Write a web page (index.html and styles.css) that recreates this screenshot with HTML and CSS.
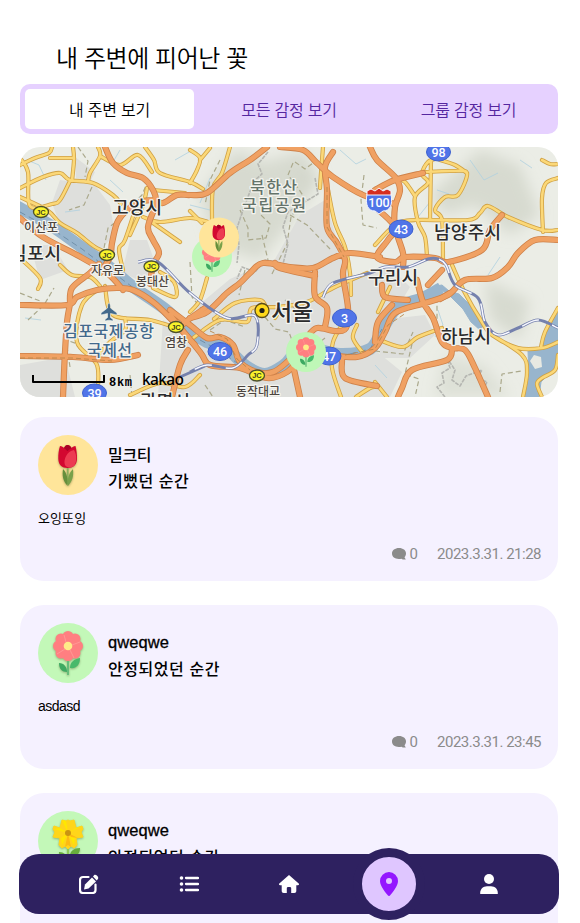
FILE: index.html
```html
<!DOCTYPE html>
<html lang="ko">
<head>
<meta charset="utf-8">
<meta name="viewport" content="width=device-width, initial-scale=1">
<title>내 주변에 피어난 꽃</title>
<link rel="stylesheet" href="styles.css">
</head>
<body>
<svg class="sprite" aria-hidden="true">
  <symbol id="tulip" viewBox="0 0 60 60">
    <path d="M29.7 32v17" stroke="#8daf5c" stroke-width="1.8"/>
    <path d="M29.5 51C25 46 24 41 25 34c4 4 5 10 4.500 17Z" fill="#668f3c"/>
    <path d="M30 51c4.500-5 5.700-10 5-17-4 4-6 10-5 17Z" fill="#79a14a"/>
    <path d="M22 11c2 0 3 1 4 2 1-2 2-3 3.500-3s3 1 4 3c1-1 2-2 4-2 1 4 1.600 8 1.500 13-.2 6-4 9-9.500 9s-9-3-9.200-9c-.1-5 .4-9 1.700-13Z" fill="#d30830"/>
    <path d="M36 15c3 5 3 12 0 16-2 2-8 2-9-1-2-5 2-14 9-15Z" fill="#ec3b52"/>
    <path d="M26 13c1-2 2-3 3.500-3s3 1 4 3l-4 3Z" fill="#a90026"/>
  </symbol>
  <symbol id="blossom" viewBox="0 0 60 60">
    <path d="M30 34v18" stroke="#65bd7a" stroke-width="2"/>
    <path d="M29 49c-5 0-8-3-8-9 5 0 8 4 8 9Z" fill="#3daa62"/>
    <path d="M32 45c0-6 4-9 10-10 0 7-4 11-10 10Z" fill="#48b96b"/>
    <g fill="#ff7f81"><circle cx="30" cy="13.500" r="5.500"/><circle cx="37" cy="16" r="5.500"/><circle cx="39.500" cy="23" r="5.500"/><circle cx="37" cy="30" r="5.500"/><circle cx="30" cy="32.500" r="5.500"/><circle cx="23" cy="30" r="5.500"/><circle cx="20.500" cy="23" r="5.500"/><circle cx="23" cy="16" r="5.500"/><circle cx="30" cy="23" r="9"/></g>
    <path d="M28 19l-2-7M34 22l8-3M32 27l4 8M27 26l-8 5" stroke="#ffa29c" stroke-width=".7"/>
    <circle cx="30" cy="23" r="4.300" fill="#ffeb88"/>
  </symbol>
  <symbol id="daisy" viewBox="0 0 60 60">
    <path d="M30 34v18" stroke="#8fca58" stroke-width="2"/>
    <path d="M29 48c-5 0-8-3-8-7 5 0 8 3 8 7ZM32 45c0-5 4-8 10-8 0 6-4 9-10 8Z" fill="#68ad3c"/>
    <path d="M24 9l4 1 2-1 2 1 4-1 2 8 6-2 1 3-2 3 2 5-7 1 1 7-3 3-3-2-3 3-3-3-3 2-3-3 1-7-7-1 2-5-2-3 1-3 6 2Z" fill="#ffd51a" stroke="#ffd51a" stroke-linejoin="round"/>
    <path d="M30 22L24 9l4 1zM30 22l8-5 6-2zM30 22l7 5-1 7zM30 22l-7 5 1 7zM30 22l-14-4 6-1z" fill="#ffe700"/>
    <path d="M30 22l3 14-3-2-3 2zM30 22l10 5-7-1z" fill="#fdb913"/>
    <circle cx="30" cy="22" r="3" fill="#c99412"/>
  </symbol>
  <symbol id="bubble" viewBox="0 0 14 12"><path d="M7 0c4 0 7 2.300 7 5.500 0 1.500-.6 2.800-1.500 3.700l1.300 2.300c-1.700.3-3.300 0-4.400-.8C4 11.800 0 9.500 0 5.500 0 2.300 3 0 7 0Z" fill="#8b8b8b"/></symbol>
</svg>

<main class="page">
  <h1 class="title">내 주변에 피어난 꽃</h1>
  <div class="tabs">
    <button class="tab tab-on">내 주변 보기</button>
    <button class="tab">모든 감정 보기</button>
    <button class="tab">그룹 감정 보기</button>
  </div>

  <svg class="map" viewBox="20 147 538 250">
    <defs>
      <filter id="soft" x="-40%" y="-40%" width="180%" height="180%"><feGaussianBlur stdDeviation="7"/></filter>
      <g id="jc"><ellipse rx="7.500" ry="5.500" fill="#f8f32b" stroke="#4d512c" stroke-width="1.300"/><text y="2.800" class="jc">JC</text></g>
      <g id="yellow">
        <path class="curve" d="M20 165 35 158 49 153 52 147M50 158H73M73 147 74 160 72 181M20 188 43 177 60 173 70 180 93 183 113 195 121 204M70 181 60 200 52 204 30 206 28 172 20 158M98 147 100 156 90 173 88 182M100 156 120 165 138 155 152 172M145 147 154 160 160 173 190 182 203 189M153 190 185 193M143 217 160 222 190 218 208 222M153 223 180 242M137 204 125 240 119 249 123 270M147 188 143 205 130 235"/>
        <path class="curve" d="M20 197 47 210 60 223 77 233 95 247 113 255M230 147 222 173 213 188 212 220M190 183 197 170 200 158 190 150M200 160 210 148M323 147 321 173 320 188M328 190 335 223 345 247 350 273 351 295M190 211 202 223M438 158 428 162 422 174 428 183 415 197 418 222 425 237 427 257M425 172 452 171 467 173 458 195 445 197 435 210 442 220 443 260M440 160 455 165 467 173M395 177 405 182 415 196M375 245 395 225 415 220 468 220 480 213 488 206 508 217 542 230 558 230M542 160 550 164 558 164M558 178 546 183 542 198 543 232M431 160 430 220"/>
        <path class="curve" d="M375 338 402 347 418 337 442 328M452 265 465 293 482 322 492 335 518 348 542 348 558 342M492 335 522 355 527 372 523 397M558 308 545 332 541 347M542 397 537 384 542 378 555 370 558 355M375 382 387 397M60 265 72 275 90 277 100 286M100 288 82 305 77 342 97 365 97 397M105 286 113 315 150 320 177 328M125 318 125 330 110 342 98 355M153 288 175 297 174 282 160 272M130 395 160 383 185 387 200 375M207 278 200 300 190 312M193 338 220 320 247 322 252 308 277 307 307 302 333 288 367 273M214 319 235 303 260 300 266 308M357 325 353 338 363 353M345 320 333 342 332 368 341 397M280 310 275 318M356 397 370 388 377 387M390 287 378 312M20 258 40 278 38 289"/>
      </g>
      <g id="orange">
        <path class="curve" d="M105 147 113 163 127 173 143 178 153 190 156 203 148 227 153 240 159 253 153 265 150 284M267 147 250 160 230 173 207 193 190 195 177 195 163 203 153 200 137 203 125 212 117 223 112 243 110 257 100 273M280 147 303 150 317 163 333 177 363 195 395 204M333 152 325 167 327 190 327 227 337 243 345 260 343 275 348 308 346 328 335 331 317 328 307 337M380 257 350 253 333 258 313 268 290 267 263 263 250 273 240 283 227 293 207 312 190 318"/>
        <path class="curve" d="M370 147 377 160 395 177 400 190 395 207 395 227 403 253 403 267M423 173 395 180 375 190M375 207 395 227 388 240 377 257 395 262 405 257 435 258 448 262 482 250 490 230 502 215M558 240 535 240 518 253 508 267 492 278 465 280 448 295 425 303 395 313 385 332 375 348 357 357 330 355M307 342 287 362 273 372 257 372 240 362 233 345 220 337 207 338 190 325 170 310M170 315 200 352 210 365 240 368 267 378 287 372 303 355M417 280 423 302 433 318 442 342 452 348 465 350 475 368 488 397M452 348 447 360 412 370 402 388 398 397M382 285 385 297 408 300M442 270 428 285M392 305 378 322 375 342"/>
        <path class="curve" d="M20 305 67 305 77 297 97 290 117 288 133 290 153 302 170 318 195 345M70 304 67 322 65 352 63 397M70 304 72 288 90 273 99 264M20 218 43 237 77 255 107 273 123 290M20 356 73 357 110 360 138 355M205 308 188 320 179 328M188 350 180 365 172 397M293 365 300 397M342 360 345 378 377 386M315 272 315 296 327 308 325 327M315 276 280 268 275 263M450 293 440 299"/>
      </g>
    </defs>
    <rect x="20" y="147" width="538" height="250" fill="#ebede6"/>
    <g filter="url(#soft)" fill="#d0d4c8">
      <path d="M200 195l35-45 30 12 40-12 15 30-35 50-25 30-45-15ZM480 150l40 15 20 50-30 20-35-30-30 10-15-20ZM485 280l45 20-10 40-30-20Z" opacity=".75"/>
      <path d="M445 355l40 10 25 32h-75ZM290 165l25 10-10 30Z" opacity=".5"/>
    </g>
    <g fill="#dedfdc">
      <path d="M60 180l35 5 15 20 5 30-15 15-40-25-8-22ZM75 157l20 15-5 10-14-4ZM130 240l17 0 7 20-10 23-22-11ZM300 215l25-15 12 40 13 40 40-13 20 20-30 50-10 62H160l10-50 30-45 30-25 45-20ZM380 320l45-5 10 20-25 23-30 0ZM20 365l45-8 10 40H20ZM30 245l23 0 15 25-28 10ZM163 320l35 20 30 57h-70ZM375 350l27 22-12 25H360Z"/>
    </g>
    <g class="stream"><path d="M27 160l12 5 7 15M120 150l-7 12 6 9M80 210l-15 2M175 160l14-8M25 318l16 2M470 160l14 20 14-7M520 160l12 8M110 180l13 12M430 202l-12 15M375 365l12 13M210 178l-10 25M437 190l12 4M500 257l-12 18M20 210l12 4"/><path d="M438 310l5 15-8 12M455 230l20-5M80 325l-14 15M340 150l16 14 10-5M190 205l20 5"/></g>
    <path class="trail" d="M78 147l10 14-3 16M92 187l-8 18-15 5M122 215l20-20 5-12M104 248l4-20 20-15M220 160l-10 20-5 25M295 162l10 7 8-6M293 163l-5 12 8 10 8 12-13 20-4 27-16 32M240 210l8 18 0 12 18-2 4-14-9-9M290 215l17 10 24 25M262 235l6 25M364 175l-3 25 2 25 14 3M28 320l16-15 10-17M70 367l-4-27 12 4M265 317l10 12 14 3 6 17M190 262l2 35 12 15M205 385l8 12M285 300l15 13 5-12M375 351l28 3 10-22M412 344l-7 30 14 5-4 18M500 392l2-18 20-3M538 350l-5 24 12 3M210 330l15-10 20 7M245 270l-6 25M130 375l2 22M430 292l7 10v18M325 338l-15 12M20 293l20 8"/>
    <path class="boundary" d="M268 152l-10 12 4 10-8 7-11 29-6 18 2 17-2 18M315 178l3 16-30 18-5 15 5 17-5 20-18-4-10 12-13-5-5 12M445 397l-8-10 7-4-2-10 8-5-3-10 8 12-3 10 8 6 6-10 16-6-5 8 10 4-4 8"/>
    <g class="water">
      <path class="curve" d="M16 206 50 225 80 246 108 266 132 286 165 309 188 330 207 342 226 348 246 366 265 374 284 365 303 348 340 354 370 349 383 328 398 307 423 298 441 288"/>
      <path class="area" d="M436 286 442 285 449 291 459 294 472 307 483 326 480 330 471 322 463 309 450 296ZM528 351 541 350 545 335 547 327 554 318 558 313V365L549 374 541 382 539 397H525L529 377Z"/>
    </g>
    <path d="M534 355l7 2 1 10-7 2-5-8Z" fill="#e8e9e2"/>
    <path class="ferry" d="M20 212l35 19 27 18 29 22 24 18M200 340l20 11 20 14M350 354l20-5 12-20"/>
    <use href="#yellow" class="road yellow-edge"/><use href="#yellow" class="road yellow-fill"/>
    <use href="#orange" class="road orange-edge"/><use href="#orange" class="road orange-fill"/>
    <path class="trail road-dash" d="M20 358H72L112 361M327 187v40l17 30M210 331l17 8 10 20 13 11M345 355l30-6 13-24 18-12"/>
    <path class="rail curve" d="M138 262H158L190 293 227 318 255 316 257 345 248 355 233 368 207 365 190 372M323 297 333 283 370 273 385 267 408 267 428 259 438 259 446 265 455 285 478 298 485 322 498 335 518 328 538 320 558 328M205 366 180 377"/>
    <path class="rail-gap curve" d="M138 262H158L190 293 227 318 255 316 257 345 248 355 233 368 207 365 190 372M323 297 333 283 370 273 385 267 408 267 428 259 438 259 446 265 455 285 478 298 485 322 498 335 518 328 538 320 558 328"/>

    <g class="shields">
      <ellipse cx="438.500" cy="152" rx="12" ry="9"/><ellipse cx="401" cy="229" rx="12" ry="9"/><ellipse cx="344.500" cy="318" rx="12" ry="9"/><ellipse cx="220" cy="351.500" rx="12" ry="9"/><ellipse cx="329" cy="356" rx="12" ry="9"/><ellipse cx="94.500" cy="393" rx="12" ry="9"/>
      <path d="M367 194h24c2 11-1 17-8 17l-4 3-4-3c-7 0-10-6-8-17Z"/><path d="M367 195v-4l4-2 4 2 4-3 4 3 4-2 4 2v4Z" class="shield-top"/>
      <text x="438.500" y="156.500">98</text><text x="401" y="233.500">43</text><text x="344.500" y="322.500">3</text><text x="220" y="356">46</text><text x="329" y="360.500">47</text><text x="94.500" y="397.500">39</text><text x="379" y="207">100</text>
    </g>
    <use href="#jc" x="41" y="212"/><use href="#jc" x="107" y="255"/><use href="#jc" x="151.500" y="266.500"/><use href="#jc" x="176" y="327"/><use href="#jc" x="257" y="375.500"/>
    <g class="city">
      <text x="112" y="213.500" textLength="50">고양시</text><text x="10" y="260" textLength="51">김포시</text><text x="434" y="239" textLength="67">남양주시</text><text x="368" y="284" textLength="50">구리시</text><text x="441" y="343" textLength="50">하남시</text><text x="140" y="408" textLength="50">광명시</text><text x="271" y="319.500" textLength="42" class="capital">서울</text>
    </g>
    <g class="place">
      <text x="24" y="231.500" textLength="34">이산포</text><text x="91" y="274.500" textLength="33">자유로</text><text x="136" y="286" textLength="33">봉대산</text><text x="165" y="347" textLength="22">염창</text><text x="236" y="396" textLength="44">동작대교</text>
    </g>
    <g class="park"><text x="250" y="193" textLength="47">북한산</text><text x="242" y="211" textLength="64">국립공원</text></g>
    <g class="airport"><text x="63" y="337" textLength="91">김포국제공항</text><text x="87" y="355.500" textLength="45">국제선</text></g>
    <path d="M109 303c-1 0-1.500 2-1.500 5l-6.500 5v2l6.500-1.500v4l-2.500 2v1.500l4-.8 4 .8v-1.500l-2.500-2v-4l6.500 1.500v-2l-6.500-5c0-3-.5-5-1.500-5Z" fill="#42698c" stroke="#f4f5ef" stroke-width=".6"/>
    <circle cx="262" cy="310.500" r="7" fill="#ffd91a" stroke="#594b18" stroke-width="1.300"/><circle cx="262" cy="310.500" r="2.600" fill="#211f18"/>
    <path d="M33 375v7H104v-7" fill="none" stroke="#000" stroke-width="2"/>
    <text class="scale" x="109" y="386" textLength="23">8km</text><text class="kakao" x="142" y="384.500" textLength="42">kakao</text>
    <circle cx="212" cy="257" r="20" fill="#bff7b7"/><use href="#blossom" x="192" y="237" width="40" height="40"/>
    <circle cx="219" cy="237.500" r="20" fill="#ffe59a"/><use href="#tulip" x="199" y="218" width="40" height="40"/>
    <circle cx="306" cy="352" r="20" fill="#bff7b7"/><use href="#blossom" x="286" y="332" width="40" height="40"/>
  </svg>

  <section class="feed">
    <article class="card">
      <div class="author"><svg class="avatar joy"><use href="#tulip"/></svg><div class="who"><span class="name">밀크티</span><span>기뻤던 순간</span></div></div>
      <p class="message">오잉또잉</p>
      <footer class="meta"><svg class="bubble"><use href="#bubble"/></svg><span class="count">0</span><time>2023.3.31. 21:28</time></footer>
    </article>
    <article class="card">
      <div class="author"><svg class="avatar calm"><use href="#blossom"/></svg><div class="who"><span class="latin">qweqwe</span><span>안정되었던 순간</span></div></div>
      <p class="message latin">asdasd</p>
      <footer class="meta"><svg class="bubble"><use href="#bubble"/></svg><span class="count">0</span><time>2023.3.31. 23:45</time></footer>
    </article>
    <article class="card">
      <div class="author"><svg class="avatar calm"><use href="#daisy"/></svg><div class="who"><span class="latin">qweqwe</span><span>안정되었던 순간</span></div></div>
    </article>
  </section>
</main>

<nav class="nav">
  <a><svg viewBox="0 0 20 20"><path d="M9.500 3H4a3 3 0 0 0-3 3v10a3 3 0 0 0 3 3h9.500a3 3 0 0 0 3-3v-5.500" fill="none" stroke="#fff" stroke-width="2.200" stroke-linecap="round"/><path d="M5 15.500l1-5L13 3.500l4 4-7.500 7Z"/><path d="M14 2.400l1.200-1.300c1.300-1.300 5.200 2 3.700 3.900l-1.200 1.500Z"/></svg></a>
  <a><svg viewBox="0 0 20 20"><path d="M7 4h12M7 10h12M7 16h12" stroke="#fff" stroke-width="2.300" stroke-linecap="round"/><circle cx="2.500" cy="4" r="1.800"/><circle cx="2.500" cy="10" r="1.800"/><circle cx="2.500" cy="16" r="1.800"/></svg></a>
  <a><svg viewBox="0 0 20 20"><path d="M10 1L.3 9.500c-.8.8-.2 1.700.8 1.700h1.600V17c0 1.200.8 2 2 2h3.100v-4.500c0-1 .5-1.500 1.400-1.500h1.600c.9 0 1.400.5 1.400 1.500V19h3.100c1.200 0 2-.8 2-2v-5.800h1.600c1 0 1.600-.9.8-1.700Z"/></svg></a>
  <a class="here"><svg viewBox="0 0 18 24"><path fill-rule="evenodd" d="M9 0a9 9 0 0 1 9 9c0 5-5.500 11.500-8 14.500-.6.700-1.400.7-2 0C5.500 20.500 0 14 0 9a9 9 0 0 1 9-9Zm0 6a3 3 0 1 0 0 6 3 3 0 0 0 0-6Z"/></svg></a>
  <a><svg viewBox="0 0 20 20"><circle cx="10" cy="5" r="5"/><path d="M1.200 20v-1.300c0-3.700 3-6.500 6.800-6.500h4c3.800 0 6.800 2.800 6.800 6.500V20Z"/></svg></a>
</nav>
<script src="curves.js"></script>
</body>
</html>
```
FILE: curves.js
```js
// Rounds the map's polylines (absolute M, L, H, V) into Catmull-Rom curves.
function points(line) {
  const pts = [];
  const tokens = line.match(/[LHV]|-?[\d.]+/g);
  let mode = "L";
  for (let i = 0; i < tokens.length;) {
    if (/[LHV]/.test(tokens[i])) { mode = tokens[i++]; continue; }
    const last = pts[pts.length - 1];
    if (mode === "H") pts.push([+tokens[i++], last[1]]);
    else if (mode === "V") pts.push([last[0], +tokens[i++]]);
    else pts.push([+tokens[i++], +tokens[i++]]);
  }
  return pts;
}

function smooth(pts) {
  let d = "M" + pts[0].join(" ");
  for (let i = 0; i < pts.length - 1; i++) {
    const a = pts[i - 1] || pts[i], b = pts[i], c = pts[i + 1], e = pts[i + 2] || c;
    d += "C" + [
      b[0] + (c[0] - a[0]) / 6, b[1] + (c[1] - a[1]) / 6,
      c[0] - (e[0] - b[0]) / 6, c[1] - (e[1] - b[1]) / 6,
      c[0], c[1]
    ].map(n => n.toFixed(1)).join(" ");
  }
  return d;
}

document.querySelectorAll(".curve").forEach(path => {
  const lines = path.getAttribute("d").split("M").filter(Boolean);
  path.setAttribute("d", lines.map(line => smooth(points(line))).join(""));
});
```
FILE: styles.css
```css
* { box-sizing: border-box; }
body {
  margin: 0;
  height: 923px;
  overflow: hidden;
  background: #fff;
  color: #000;
  font-family: "Noto Sans CJK KR", "Noto Sans", sans-serif;
}
.sprite { display: none; }
.page { padding: 39px 22px 0 20px; }
.title {
  margin: 0 0 9px;
  padding-left: 36px;
  font-size: 24px;
  line-height: 36px;
  font-weight: 350;
  letter-spacing: -.45px;
}
.tabs {
  display: grid;
  grid-template-columns: repeat(3, 169px);
  justify-content: space-between;
  height: 50px;
  padding: 5px;
  border-radius: 10px;
  background: #e6d1ff;
}
.tab {
  border: 0;
  padding: 0;
  border-radius: 5px;
  background: none;
  color: #5526a0;
  font: 350 16px/24px "Noto Sans CJK KR", sans-serif;
  letter-spacing: -.2px;
}
.tab-on { background: #fff; color: #000; }

.map {
  display: block;
  width: 100%;
  height: 250px;
  margin-top: 13px;
  border-radius: 20px;
}
.map path { stroke-linejoin: round; }
.stream { fill: none; stroke: #afd0df; stroke-width: .8; }
.trail { fill: none; stroke: #aaa88b; stroke-width: 1.2; stroke-dasharray: 5 3; }
.boundary { fill: none; stroke: #b5b6b1; stroke-width: 1.6; stroke-dasharray: 4 1; }
.water { fill: none; stroke: #98b5cd; stroke-width: 12; }
.water .area { fill: #98b5cd; stroke-width: 1; }
.ferry { fill: none; stroke: #7190a9; stroke-width: 1; stroke-dasharray: 6 4; }
.road { fill: none; stroke-linecap: round; }
.yellow-edge { stroke: #d0a144; stroke-width: 4.2; }
.yellow-fill { stroke: #fbd878; stroke-width: 2.6; }
.orange-edge { stroke: #ce8149; stroke-width: 6.2; }
.orange-fill { stroke: #f0a163; stroke-width: 4.6; }
.road-dash { stroke: #b98749; stroke-width: .9; }
.rail { fill: none; stroke: #7581ad; stroke-width: 3; }
.rail-gap { fill: none; stroke: #f7f8ff; stroke-width: 1.5; stroke-dasharray: 18 14; }
.shields { fill: #5074e8; stroke: #f4f6ff; stroke-width: 1; }
.shields ellipse { stroke: #3c61cf; }
.shields .shield-top { fill: #d62e20; }
.shields text { fill: #fff; stroke: none; font: 500 12.500px Roboto, sans-serif; text-anchor: middle; }
.jc { fill: #3e421e; font: bold 7.500px "Liberation Sans", sans-serif; text-anchor: middle; }
.city text, .place text, .park text, .airport text {
  font-family: "Noto Sans CJK KR", sans-serif;
  paint-order: stroke;
  stroke: #f4f4ef;
  stroke-width: 2.5px;
  stroke-linejoin: round;
}
.city { fill: #2b2b2c; font-size: 18px; font-weight: 500; }
.city .capital { font-size: 23px; }
.place { fill: #4d4540; font-size: 12px; font-weight: 500; }
.park { fill: #64736a; font-size: 16px; font-weight: 500; }
.airport { fill: #42698c; font-size: 16px; font-weight: 500; }
.scale { font: bold 12px "Liberation Mono", monospace; paint-order: stroke; stroke: #eee; stroke-width: 1px; }
.kakao { font: 500 15.500px "Noto Sans", sans-serif; }

.feed { display: flex; flex-direction: column; gap: 24px; margin-top: 20px; }
.card {
  display: flex;
  flex-direction: column;
  height: 164px;
  padding: 18px 17px 15px 18px;
  border-radius: 24px;
  background: #f5f1ff;
}
.author { display: flex; align-items: center; gap: 10px; }
.avatar { width: 60px; height: 60px; border-radius: 50%; }
.joy { background: #ffe59a; }
.calm { background: #c3f8b8; }
.avatar use { filter: drop-shadow(0 1px 1px rgba(70, 80, 30, .4)); }
.who { display: grid; grid-auto-rows: 26px; padding-top: 3px; font-size: 16px; line-height: 26px; font-weight: 500; letter-spacing: .55px; }
.who .name { letter-spacing: -.3px; }
.who .latin { font-family: "Liberation Sans", sans-serif; font-size: 16.500px; letter-spacing: .1px; -webkit-text-stroke: .3px #000; }
.message { margin: 11px 0 0; font-size: 13px; line-height: 24px; font-weight: 400; letter-spacing: .1px; }
.message.latin { font-family: "Liberation Sans", sans-serif; font-size: 14px; letter-spacing: -.5px; }
.meta { display: flex; align-items: center; margin-top: auto; justify-content: flex-end; color: #8b8b8b; font: 15px/24px Roboto, sans-serif; }
.bubble { width: 14px; height: 12px; margin-right: 4px; }
.count { margin-right: 19px; }
.meta time { letter-spacing: -.5px; }

.nav {
  position: fixed;
  left: 19px;
  top: 854px;
  width: 540px;
  height: 60px;
  padding: 0 20px;
  border-radius: 20px;
  display: grid;
  grid-template-columns: repeat(5, 1fr);
  place-items: center;
  background: #2e2160;
}
.nav a { display: grid; place-items: center; }
.nav svg { width: 20px; height: 20px; fill: #fff; }
.nav .here {
  width: 72px;
  height: 72px;
  margin: -6px 0;
  border: 9.400px solid #2e2160;
  border-radius: 50%;
  background: #dfc6ff;
}
.nav .here svg { width: 18px; height: 24px; fill: #9417ff; }
```
